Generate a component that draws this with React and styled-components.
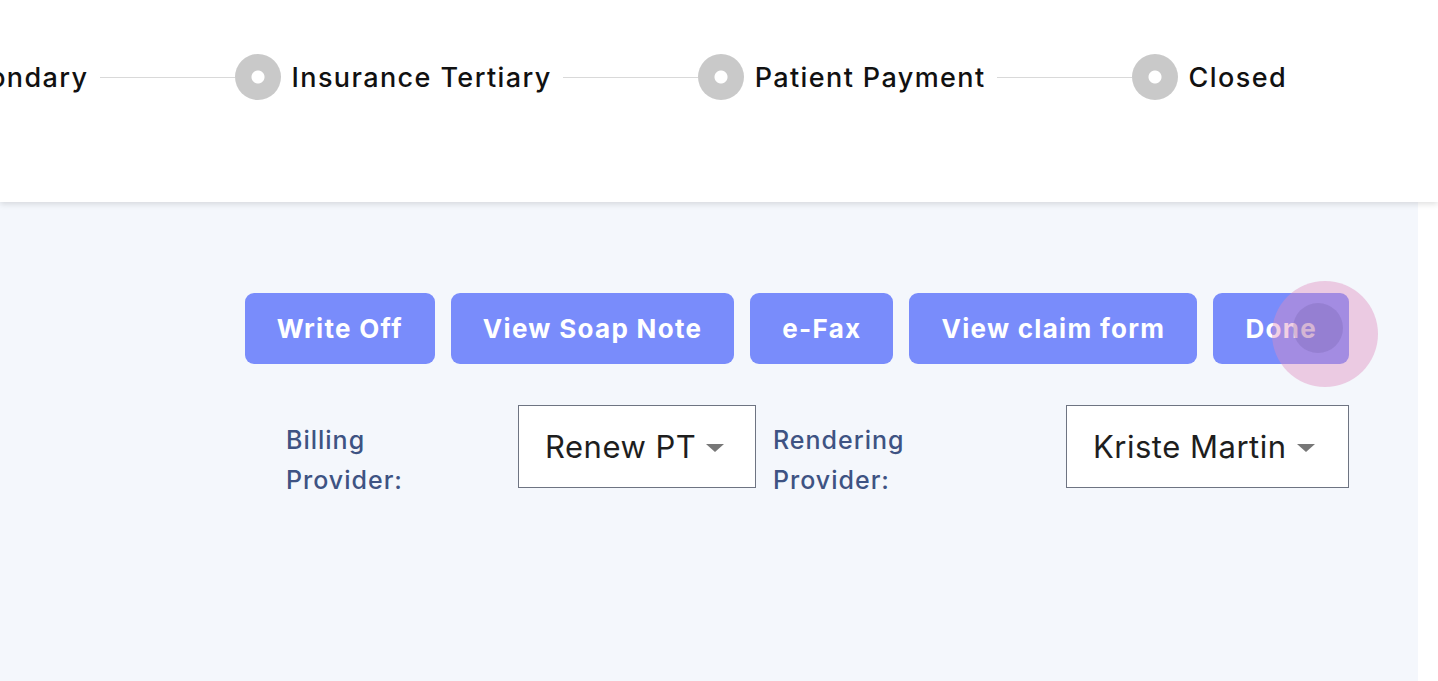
import * as React from "react";
import styled, { createGlobalStyle } from "styled-components";

const GlobalStyle = createGlobalStyle`
  html, body {
    margin: 0;
    padding: 0;
    background: #fff;
    font-family: Inter, "Noto Sans", sans-serif;
  }
`;

const steps = ["Insurance Secondary", "Insurance Tertiary", "Patient Payment", "Closed"];
const actions = ["Write Off", "View Soap Note", "e-Fax", "View claim form", "Done"];

function App() {
  return (
    <Page>
      <GlobalStyle />
      <Header>
        <Stepper>
          {steps.map((s, i) => (
            <React.Fragment key={s}>
              {i > 0 && (
                <>
                  <Line />
                  <Dot />
                </>
              )}
              <StepLabel>{s}</StepLabel>
            </React.Fragment>
          ))}
        </Stepper>
      </Header>
      <Main>
        <Actions>
          {actions.map((a) => (
            <Button key={a}>
              {a}
              {a === "Done" && (
                <Ripple>
                  <RippleCore />
                </Ripple>
              )}
            </Button>
          ))}
        </Actions>
        <Providers>
          <Label $w={232}>
            Billing
            <br />
            Provider:
          </Label>
          <Select $w={238}>
            Renew PT
            <Caret />
          </Select>
          <Label $w={293} $gap={17}>
            Rendering
            <br />
            Provider:
          </Label>
          <Select $w={283}>
            Kriste Martin
            <Caret />
          </Select>
        </Providers>
      </Main>
    </Page>
  );
}

const Page = styled.div`
  display: flex;
  flex-direction: column;
  width: 100%;
  height: 100vh;
  overflow: hidden;
`;

const Header = styled.header`
  height: 202px;
  flex-shrink: 0;
  background: #fff;
  box-shadow: 0 2px 6px rgba(0, 0, 0, 0.13);
  position: relative;
  z-index: 1;
  overflow: hidden;
`;

const Stepper = styled.div`
  display: flex;
  align-items: center;
  justify-content: flex-end;
  height: 46px;
  margin-top: 54px;
  padding-right: 151px;
  white-space: nowrap;
`;

const StepLabel = styled.span`
  flex-shrink: 0;
  font: 500 27px/1 Inter, sans-serif;
  color: #111;
  letter-spacing: 1.4px;
`;

const Line = styled.span`
  flex-shrink: 0;
  width: 135px;
  height: 1px;
  margin-left: 11px;
  background: #d9d9d9;
`;

const Dot = styled.span`
  flex-shrink: 0;
  width: 46px;
  height: 46px;
  margin-right: 11px;
  border-radius: 50%;
  background: radial-gradient(circle, #fff 0 6px, #c9c9c9 7px);
`;

const Main = styled.main`
  flex: 1;
  width: 1418px;
  background: #f4f7fc;
  display: flex;
  flex-direction: column;
  padding: 91px 69px 0 0;
  box-sizing: border-box;
`;

const Actions = styled.div`
  display: flex;
  justify-content: flex-end;
  gap: 16px;
`;

const Button = styled.button`
  position: relative;
  height: 71px;
  padding: 0 32px;
  border: none;
  border-radius: 9px;
  background: #798cfb;
  color: #fff;
  font: 700 26px/1 Inter, sans-serif;
  letter-spacing: 1.3px;
  cursor: pointer;
`;

const Ripple = styled.span`
  position: absolute;
  right: -29px;
  top: -12px;
  width: 106px;
  height: 106px;
  border-radius: 50%;
  background: rgba(222, 140, 190, 0.42);
  display: flex;
  align-items: center;
  justify-content: center;
`;

const RippleCore = styled.span`
  width: 50px;
  height: 50px;
  margin: -12px 0 0 -14px;
  border-radius: 50%;
  background: rgba(90, 70, 140, 0.18);
`;

const Providers = styled.div`
  display: flex;
  justify-content: flex-end;
  align-items: flex-start;
  margin-top: 41px;
`;

const Label = styled.div`
  width: ${(p) => p.$w}px;
  margin-left: ${(p) => p.$gap || 0}px;
  margin-top: 15px;
  box-sizing: border-box;
  font: 500 25px/40px Inter, sans-serif;
  letter-spacing: 1px;
  color: #3e5383;
`;

const Select = styled.div`
  width: ${(p) => p.$w}px;
  height: 83px;
  box-sizing: border-box;
  border: 1.5px solid #6e7482;
  background: #fff;
  display: flex;
  align-items: center;
  padding-left: 26px;
  gap: 10px;
  font: 400 31px/1 Inter, sans-serif;
  letter-spacing: 0.5px;
  color: #1e1e1e;
`;

const Caret = styled.span`
  width: 0;
  height: 0;
  border-left: 9px solid transparent;
  border-right: 9px solid transparent;
  border-top: 8px solid #777;
  margin-top: 2px;
`;

export default App;
